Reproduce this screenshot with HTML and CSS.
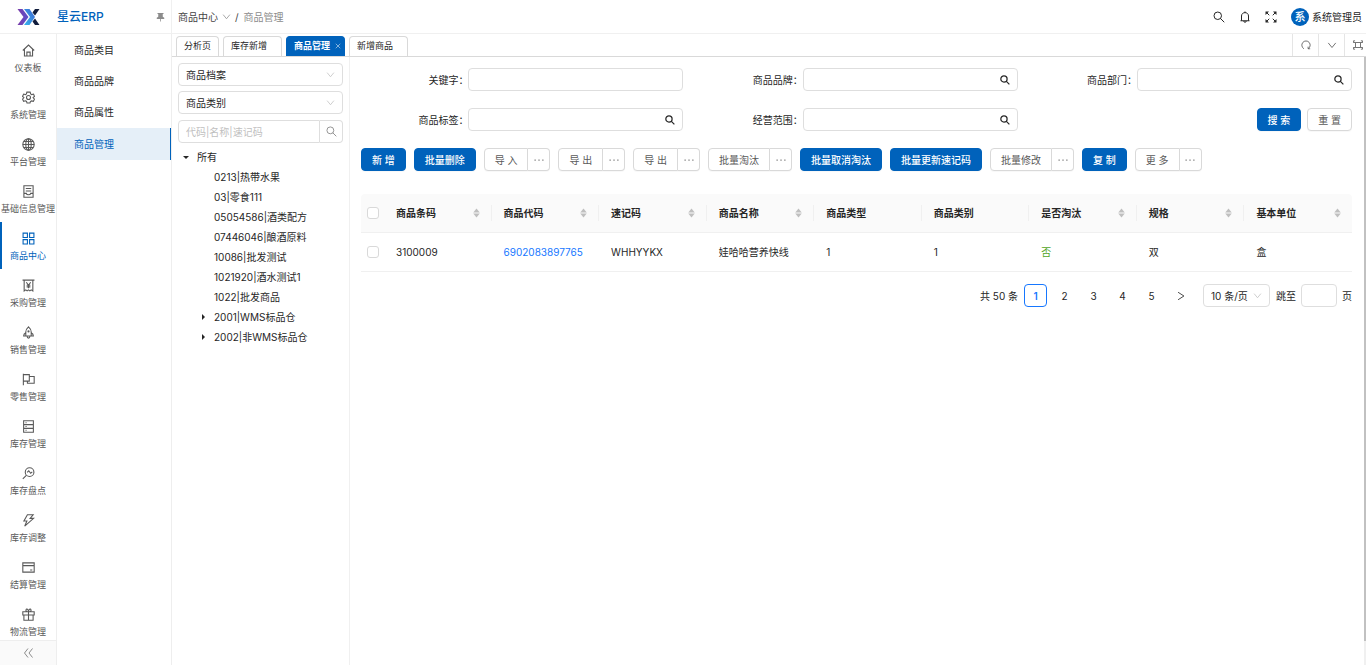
FILE: index.html
```html
<!DOCTYPE html>
<html lang="zh-CN">
<head>
<meta charset="utf-8">
<title>商品管理 - 星云ERP</title>
<link rel="stylesheet" href="styles.css">
</head>
<body>
<svg class="sprite" aria-hidden="true">
  <symbol id="search" viewBox="0 0 24 24"><circle cx="9.5" cy="9.5" r="7.500"/><path d="M14.7 14.7 22.500 22.500"/></symbol>
  <symbol id="down" viewBox="0 0 24 24"><path d="M3 7l9 11 9-11"/></symbol>
  <symbol id="home" viewBox="0 0 24 24"><path d="M1.500 12 12 2l10.500 10M4.500 10v12h15V10M9 22v-7h6v7"/></symbol>
  <symbol id="gear" viewBox="0 0 24 24"><circle cx="12" cy="12" r="3.700"/><path d="M9 2h6l1 3.500 2 1.200 3.300-1L23 10l-2.500 2.200L23 15l-2 4-3.500-.8-2 1.300L14.800 22H9.200l-.8-2.700-2-1.200L3 19l-2-4 2.500-2.800L1 10l2-4.300 3.200 1L8.200 5.500z"/></symbol>
  <symbol id="globe" viewBox="0 0 24 24"><circle cx="12" cy="12" r="10.500"/><ellipse cx="12" cy="12" rx="5" ry="10.500"/><path d="M1.500 12h21M12 1.500v21M3.500 6.500h17M3.500 17.500h17"/></symbol>
  <symbol id="doc" viewBox="0 0 24 24"><path d="M3.500 1.500h17v21h-17zM7 6.500h10M7 11h10M3.500 15.500H8c.5 3.500 7.500 3.500 8 0h4.500"/></symbol>
  <symbol id="grid" viewBox="0 0 24 24"><path d="M2 2h8v8H2zM14 2h8v8h-8zM2 14h8v8H2zM14 14h8v8h-8z"/></symbol>
  <symbol id="buy" viewBox="0 0 24 24"><path d="M1 2h22M4 2v20l3-2 2.500 2 2.500-2 2.500 2 2.500-2 3 2V2M8 6l4 5.500L16 6M12 11.500V17M8.500 11.500h7M8.500 14.500h7"/></symbol>
  <symbol id="rocket" viewBox="0 0 24 24"><path d="M12 1.500C8.500 4.500 7 7.500 7 11v7.500h10V11c0-3.500-1.500-6.500-5-9.500zM7 12.500c-3 1.500-4 3.500-4 6h4M17 12.500c3 1.500 4 3.500 4 6h-4M9.500 19c0 4.500 5 4.500 5 0"/><circle cx="12" cy="10" r="1"/></symbol>
  <symbol id="flag" viewBox="0 0 24 24"><path d="M2.500 1.500v21M2.500 3h11v12h-11M13.500 6.500h9v12.500H10v-4"/></symbol>
  <symbol id="rack" viewBox="0 0 24 24"><path d="M3 1.500h18v21H3zM3 8.500h18M3 15.500h18M6.500 5h2M6.500 12h2M6.500 19h2"/></symbol>
  <symbol id="check" viewBox="0 0 24 24"><circle cx="14" cy="9.500" r="8"/><path d="M8 15.500 1.500 22M9.500 10l3-3 3.500 4.500 3-2.500"/></symbol>
  <symbol id="bolt" viewBox="0 0 24 24"><path d="M10 1.500h10.500L15 8h6.500L5 22.500 9 13H3.500z"/></symbol>
  <symbol id="card" viewBox="0 0 24 24"><path d="M1.500 3.500h21v17h-21zM1.500 8.500h21M15 16.500h4"/></symbol>
  <symbol id="gift" viewBox="0 0 24 24"><path d="M1.500 7h21v6h-21zM3.500 13v9.500h17V13M12 7v15.500M12 7C8 7 6.500 5 7.500 3s4.500-1 4.500 4c0-5 3.500-6 4.500-4S16 7 12 7z"/></symbol>
  <symbol id="collapse" viewBox="0 0 24 24"><path d="M12 3l-7 9 7 9M21 3l-7 9 7 9"/></symbol>
  <symbol id="bell" viewBox="0 0 24 24"><path d="M3 19.500h18M5 19.500V10c0-9 14-9 14 0v9.500M12 1v2.500M9.500 20c0 3.500 5 3.500 5 0"/></symbol>
  <symbol id="full" viewBox="0 0 24 24"><path d="M2.500 2.500l6 6M21.500 2.500l-6 6M21.500 21.500l-6-6M2.500 21.500l6-6"/><path class="solid" d="M1 1h7L1 8zM23 1v7l-7-7zM23 23h-7l7-7zM1 23v-7l7 7z"/></symbol>
  <symbol id="reload" viewBox="0 0 24 24"><path d="M7 21a10 10 0 1 1 10 0M17 16v5h5"/></symbol>
  <symbol id="frame" viewBox="0 0 24 24"><path d="M6 6h12v12H6zM1 7V2h4M19 2h4v5M23 17v5h-4M5 22H1v-5M2 6h4M2 18h4M18 6h4M18 18h4"/></symbol>
  <symbol id="pin" viewBox="0 0 24 24"><path class="solid" d="M4 1h16v3h-2v7l4 3v3h-9v7h-2v-7H2v-3l4-3V4H4z"/></symbol>
  <symbol id="sort" viewBox="0 0 14 20"><path class="solid" d="M7 1l6.500 8H.5zM7 19l6.500-8H.5z"/></symbol>
  <symbol id="dots" viewBox="0 0 24 24"><path class="solid" d="M1 10.500h3.500V14H1zM10.300 10.500h3.500V14h-3.500zM19.500 10.500H23V14h-3.500z"/></symbol>
  <symbol id="next" viewBox="0 0 24 24"><path d="M5 3l14 9-14 9"/></symbol>
  <symbol id="close" viewBox="0 0 24 24"><path d="M3 3l18 18M21 3 3 21"/></symbol>
</svg>

<header class="header">
  <div class="brand">
    <svg class="logo" viewBox="0 0 46 32" aria-hidden="true">
      <defs>
        <linearGradient id="g1" x1="0" x2="1" y1="0" y2="0"><stop offset="0" stop-color="#7a3ba8"/><stop offset="1" stop-color="#5a50cc"/></linearGradient>
        <linearGradient id="g2" x1="0" x2="1" y1="1" y2="0"><stop offset="0" stop-color="#35b6ee"/><stop offset="1" stop-color="#3d62d2"/></linearGradient>
      </defs>
      <path fill="url(#g1)" d="M1 0h10l12 16-12 16H1l12-16z"/>
      <path fill="url(#g2)" d="M14 0h11l11 16-11 16H14l12-16z"/>
      <path fill="#101c3c" d="M36 0h9L36 13l-5-6zM36 19l9 13h-9l-5-7z"/>
    </svg>
    <strong class="brand-name">星云ERP</strong>
    <svg class="icon pin"><use href="#pin"/></svg>
  </div>
  <nav class="crumbs" aria-label="面包屑">
    <a href="#">商品中心</a><svg class="icon chev"><use href="#down"/></svg><span>/</span><span class="muted">商品管理</span>
  </nav>
  <div class="user-tools">
    <button aria-label="搜索"><svg class="icon"><use href="#search"/></svg></button>
    <button aria-label="通知"><svg class="icon"><use href="#bell"/></svg></button>
    <button aria-label="全屏"><svg class="icon"><use href="#full"/></svg></button>
    <a class="user" href="#"><span class="avatar">系</span>系统管理员</a>
  </div>
</header>

<div class="shell">
  <nav class="rail" aria-label="主菜单">
    <div class="rail-list">
      <a href="#"><svg class="icon"><use href="#home"/></svg>仪表板</a>
      <a href="#"><svg class="icon"><use href="#gear"/></svg>系统管理</a>
      <a href="#"><svg class="icon"><use href="#globe"/></svg>平台管理</a>
      <a href="#"><svg class="icon"><use href="#doc"/></svg>基础信息管理</a>
      <a href="#" class="active"><svg class="icon"><use href="#grid"/></svg>商品中心</a>
      <a href="#"><svg class="icon"><use href="#buy"/></svg>采购管理</a>
      <a href="#"><svg class="icon"><use href="#rocket"/></svg>销售管理</a>
      <a href="#"><svg class="icon"><use href="#flag"/></svg>零售管理</a>
      <a href="#"><svg class="icon"><use href="#rack"/></svg>库存管理</a>
      <a href="#"><svg class="icon"><use href="#check"/></svg>库存盘点</a>
      <a href="#"><svg class="icon"><use href="#bolt"/></svg>库存调整</a>
      <a href="#"><svg class="icon"><use href="#card"/></svg>结算管理</a>
      <a href="#"><svg class="icon"><use href="#gift"/></svg>物流管理</a>
    </div>
    <button class="rail-toggle" aria-label="收起菜单"><svg class="icon"><use href="#collapse"/></svg></button>
  </nav>

  <nav class="submenu" aria-label="商品中心">
    <a href="#">商品类目</a>
    <a href="#">商品品牌</a>
    <a href="#">商品属性</a>
    <a href="#" class="active">商品管理</a>
  </nav>

  <div class="workspace">
    <div class="tabbar">
      <div class="tabs">
        <a href="#">分析页</a>
        <a href="#" class="closable">库存新增</a>
        <a href="#" class="closable active">商品管理<svg class="icon"><use href="#close"/></svg></a>
        <a href="#" class="closable">新增商品</a>
      </div>
      <div class="tab-tools">
        <button aria-label="刷新"><svg class="icon"><use href="#reload"/></svg></button>
        <button aria-label="更多"><svg class="icon"><use href="#down"/></svg></button>
        <button aria-label="最大化"><svg class="icon"><use href="#frame"/></svg></button>
      </div>
    </div>

    <div class="page">
      <aside class="filter">
        <div class="select"><select aria-label="档案"><option>商品档案</option></select><svg class="icon chev"><use href="#down"/></svg></div>
        <div class="select"><select aria-label="类别"><option>商品类别</option></select><svg class="icon chev"><use href="#down"/></svg></div>
        <div class="tree-search"><input type="text" aria-label="搜索分类" placeholder="代码|名称|速记码"><button aria-label="搜索"><svg class="icon"><use href="#search"/></svg></button></div>
        <ul class="tree">
          <li class="open">所有
            <ul>
              <li>0213|热带水果</li>
              <li>03|零食111</li>
              <li>05054586|酒类配方</li>
              <li>07446046|酿酒原料</li>
              <li>10086|批发测试</li>
              <li>1021920|酒水测试1</li>
              <li>1022|批发商品</li>
              <li class="closed">2001|WMS标品仓</li>
              <li class="closed">2002|非WMS标品仓</li>
            </ul>
          </li>
        </ul>
      </aside>

      <main class="content">
        <form class="query">
          <div class="field"><label for="keyword">关键字：</label><div class="box"><input id="keyword" type="text"></div></div>
          <div class="field"><label for="brand">商品品牌：</label><div class="box"><input id="brand" type="text"><svg class="icon"><use href="#search"/></svg></div></div>
          <div class="field"><label for="dept">商品部门：</label><div class="box"><input id="dept" type="text"><svg class="icon"><use href="#search"/></svg></div></div>
          <div class="field"><label for="tag">商品标签：</label><div class="box"><input id="tag" type="text"><svg class="icon"><use href="#search"/></svg></div></div>
          <div class="field"><label for="scope">经营范围：</label><div class="box"><input id="scope" type="text"><svg class="icon"><use href="#search"/></svg></div></div>
          <div class="query-actions"><button type="button" class="btn primary">搜 索</button><button type="button" class="btn">重 置</button></div>
        </form>

        <div class="toolbar">
          <button class="btn primary">新 增</button>
          <button class="btn primary">批量删除</button>
          <div class="split"><button class="btn">导 入</button><button class="btn more" aria-label="更多导入"><svg class="icon"><use href="#dots"/></svg></button></div>
          <div class="split"><button class="btn">导 出</button><button class="btn more" aria-label="更多导出"><svg class="icon"><use href="#dots"/></svg></button></div>
          <div class="split"><button class="btn">导 出</button><button class="btn more" aria-label="更多导出"><svg class="icon"><use href="#dots"/></svg></button></div>
          <div class="split"><button class="btn">批量淘汰</button><button class="btn more" aria-label="更多淘汰"><svg class="icon"><use href="#dots"/></svg></button></div>
          <button class="btn primary">批量取消淘汰</button>
          <button class="btn primary">批量更新速记码</button>
          <div class="split"><button class="btn">批量修改</button><button class="btn more" aria-label="更多修改"><svg class="icon"><use href="#dots"/></svg></button></div>
          <button class="btn primary">复 制</button>
          <div class="split"><button class="btn">更 多</button><button class="btn more" aria-label="更多操作"><svg class="icon"><use href="#dots"/></svg></button></div>
        </div>

        <table class="goods">
          <thead>
            <tr>
              <th class="pick"><input type="checkbox" aria-label="全选"></th>
              <th><div class="head">商品条码<svg class="sort"><use href="#sort"/></svg></div></th>
              <th><div class="head">商品代码<svg class="sort"><use href="#sort"/></svg></div></th>
              <th><div class="head">速记码<svg class="sort"><use href="#sort"/></svg></div></th>
              <th><div class="head">商品名称<svg class="sort"><use href="#sort"/></svg></div></th>
              <th><div class="head">商品类型</div></th>
              <th><div class="head">商品类别</div></th>
              <th><div class="head">是否淘汰<svg class="sort"><use href="#sort"/></svg></div></th>
              <th><div class="head">规格<svg class="sort"><use href="#sort"/></svg></div></th>
              <th><div class="head">基本单位<svg class="sort"><use href="#sort"/></svg></div></th>
            </tr>
          </thead>
          <tbody>
            <tr>
              <td class="pick"><input type="checkbox" aria-label="选择 3100009"></td>
              <td>3100009</td>
              <td><a href="#">6902083897765</a></td>
              <td>WHHYYKX</td>
              <td>娃哈哈营养快线</td>
              <td>1</td>
              <td>1</td>
              <td class="no">否</td>
              <td>双</td>
              <td>盒</td>
            </tr>
          </tbody>
        </table>

        <nav class="pager" aria-label="分页">
          <span>共 50 条</span>
          <div class="pages">
            <button class="current">1</button><button>2</button><button>3</button><button>4</button><button>5</button><button aria-label="下一页"><svg class="icon"><use href="#next"/></svg></button>
          </div>
          <div class="select size"><select aria-label="每页条数"><option>10 条/页</option></select><svg class="icon chev"><use href="#down"/></svg></div>
          <label for="jump">跳至</label><input id="jump" type="text"><span>页</span>
        </nav>
      </main>
      <div class="scroll"><div class="thumb"></div></div>
    </div>
  </div>
</div>
</body>
</html>
```

FILE: styles.css
```css
* { box-sizing: border-box; }

body {
  margin: 0;
  height: 100vh;
  display: flex;
  flex-direction: column;
  overflow: hidden;
  background: #fff;
  color: #262626;
  font: 10px/16px Inter, "Noto Sans CJK SC", sans-serif;
}

a { color: inherit; text-decoration: none; }
button, input, select { font: inherit; color: inherit; margin: 0; }
button { background: none; border: 0; padding: 0; display: flex; align-items: center; justify-content: center; }
ul { list-style: none; margin: 0; padding: 0; }

.sprite { display: none; }
.icon { width: 12px; height: 12px; flex: none; fill: none; stroke: currentColor; stroke-width: 2; }
.solid { fill: currentColor; stroke: none; }
.chev { width: 9px; height: 9px; color: #bfbfbf; }

/* Header */
.header { flex: none; display: flex; height: 34px; border-bottom: 1px solid #f0f0f0; }
.brand { width: 172px; padding: 0 6px 0 17px; border-right: 1px solid #f0f0f0; display: flex; align-items: center; }
.logo { width: 23px; height: 16px; }
.brand-name { margin-left: 17px; font-size: 12px; font-weight: 500; color: #0062bb; }
.pin { width: 9px; height: 10px; margin-left: auto; color: #8c8c8c; }
.crumbs { flex: 1; display: flex; align-items: center; gap: 4px; padding-left: 6px; color: #434343; }
.crumbs .chev { color: #8c8c8c; }
.crumbs .muted { margin-left: 1px; }
.muted { color: #8c8c8c; }
.user-tools { display: flex; align-items: center; gap: 14px; padding-right: 4px; }
.user { display: flex; align-items: center; gap: 3px; }
.avatar { width: 18px; height: 18px; border-radius: 50%; background: #0062bb; color: #fff; font-size: 11px; line-height: 18px; text-align: center; font-weight: 500; }

/* Side navigation */
.shell { flex: 1; min-height: 0; display: flex; }
.rail { flex: none; width: 57px; display: flex; flex-direction: column; border-right: 1px solid #eee; color: #595959; }
.rail-list { flex: 1; min-height: 0; overflow: hidden; font-size: 9px; }
.rail-list a { height: 47px; padding-top: 10px; display: flex; flex-direction: column; align-items: center; gap: 3px; white-space: nowrap; }
.rail-list .icon { width: 13px; height: 13px; }
.rail-list .active { color: #0062bb; box-shadow: inset 2px 0 #0062bb; }
.rail-toggle { height: 25px; border-top: 1px solid #eee; background: #fafafa; color: #8c8c8c; }
.submenu { flex: none; width: 115px; padding-top: 1px; border-right: 1px solid #eee; }
.submenu a { display: block; height: 31px; line-height: 31px; padding-left: 17px; }
.submenu .active { height: 32px; line-height: 32px; background: #e5eff8; color: #0062bb; border-right: 1px solid #0062bb; }

/* Tabs */
.workspace { flex: 1; min-width: 0; display: flex; flex-direction: column; }
.tabbar { flex: none; height: 23px; display: flex; justify-content: space-between; border-bottom: 1px solid #d9d9d9; }
.tabs { display: flex; align-items: flex-end; gap: 4px; padding-left: 4px; font-size: 9px; line-height: 18px; }
.tabs a { height: 20px; padding: 0 7px 1px; display: flex; align-items: center; border: 1px solid #d9d9d9; border-bottom: 0; border-radius: 4px 4px 0 0; }
.tabs .closable { width: 59px; }
.tabs .active { justify-content: space-between; padding-right: 3px; background: #0062bb; border-color: #0062bb; color: #fff; font-weight: 700; }
.tabs .icon { width: 6px; height: 6px; }
.tab-tools { display: flex; margin-right: -4px; }
.tab-tools button { width: 26px; border-left: 1px solid #e5e5e5; color: #595959; }
.tab-tools .icon { width: 10px; height: 10px; }

/* Category filter */
.page { flex: 1; min-height: 0; display: flex; }
.filter { flex: none; width: 178px; padding: 6px 6px 0; border-right: 1px solid #f0f0f0; }
.select { position: relative; display: flex; align-items: center; margin-bottom: 5px; }
.select select { width: 100%; height: 23px; padding: 0 7px; appearance: none; background: #fff; border: 1px solid #dedede; border-radius: 4px; }
.select .chev { position: absolute; right: 8px; pointer-events: none; }
.tree-search { display: flex; margin-top: 6px; }
.tree-search input { flex: 1; min-width: 0; height: 23px; padding: 0 7px; border: 1px solid #dedede; border-radius: 4px 0 0 4px; }
.tree-search input::placeholder { color: #bfbfbf; }
.tree-search button { width: 23px; border: 1px solid #dedede; border-left: 0; border-radius: 0 4px 4px 0; color: #8c8c8c; }
.tree-search .icon { width: 11px; height: 11px; }
.tree { margin-top: 4px; line-height: 20px; }
.tree li { padding-left: 19px; position: relative; white-space: nowrap; }
.tree ul li { padding-left: 17px; }
.open::before, .closed::before { content: ""; position: absolute; border: 3px solid transparent; }
.open::before { left: 5px; top: 9px; border-top-color: #262626; }
.closed::before { left: 5px; top: 7px; border-left-color: #262626; }

/* Query form */
.content { flex: 1; min-width: 0; padding: 11px 12px 0 11px; }
.query { display: grid; grid-template-columns: repeat(3, 1fr); gap: 17px 12px; }
.field { display: grid; grid-template-columns: 1fr 2fr; align-items: center; }
.field label { text-align: right; white-space: nowrap; }
.box { position: relative; display: flex; align-items: center; }
.box input { width: 100%; height: 23px; padding: 0 24px 0 8px; border: 1px solid #dedede; border-radius: 4px; }
.box .icon { position: absolute; right: 8px; width: 10px; height: 10px; color: #262626; stroke-width: 3; }
.query-actions { display: flex; justify-content: flex-end; gap: 6px; }

.btn { height: 23px; padding: 0 10px; border: 1px solid #d9d9d9; border-radius: 4px; background: #fff; color: #595959; white-space: nowrap; box-shadow: 0 1px 1px #00000008; }
.primary { background: #0062bb; border-color: #0062bb; color: #fff; font-weight: 500; }
.toolbar { display: flex; flex-wrap: wrap; gap: 8px; margin-top: 17px; }
.split { display: flex; }
.split .btn:first-child { border-radius: 4px 0 0 4px; }
.split .more { width: 22px; padding: 0; border-left: 0; border-radius: 0 4px 4px 0; color: #8c8c8c; }
.more .icon { width: 10px; height: 10px; }

/* Goods table */
.goods { width: 100%; margin-top: 23px; table-layout: fixed; border-spacing: 0; }
.goods th, .goods td { height: 39px; padding: 0 12px; text-align: left; border-bottom: 1px solid #f0f0f0; }
.goods th { background: #fafafa; font-weight: 600; }
.goods th:first-child { border-top-left-radius: 4px; }
.goods th:last-child { border-top-right-radius: 4px; }
.goods .pick { width: 23px; padding: 0 0 0 6px; }
.goods input { display: block; appearance: none; width: 12px; height: 12px; border: 1px solid #d9d9d9; border-radius: 3px; background: #fff; }
.head { display: flex; align-items: center; justify-content: space-between; margin-right: -12px; padding-right: 11px; border-right: 1px solid #f0f0f0; }
.goods th:last-child .head { border-right: 0; }
.sort { width: 7px; height: 10px; color: #bfbfbf; }
.goods a { color: #1677ff; }
.goods .no { color: #52a51e; }

/* Pagination */
.pager { display: flex; align-items: center; justify-content: flex-end; gap: 6px; margin-top: 12px; }
.pages { display: flex; gap: 6px; margin-right: 5px; }
.pages button { width: 22px; height: 23px; border: 1px solid transparent; border-radius: 4px; }
.pages button:not(.current) { width: 23px; }
.pages .current { width: 23px; border-color: #1677ff; color: #1677ff; font-weight: 600; }
.pages .icon { width: 10px; height: 10px; }
.size { width: 67px; margin: 0; }
.pager label { margin-right: -1px; }
.pager > input { width: 36px; height: 23px; margin-right: -1px; border: 1px solid #dedede; border-radius: 4px; }

.scroll { flex: none; width: 2px; background: #f0f0f0; }
.thumb { height: 96%; background: #c1c1c1; }
```
